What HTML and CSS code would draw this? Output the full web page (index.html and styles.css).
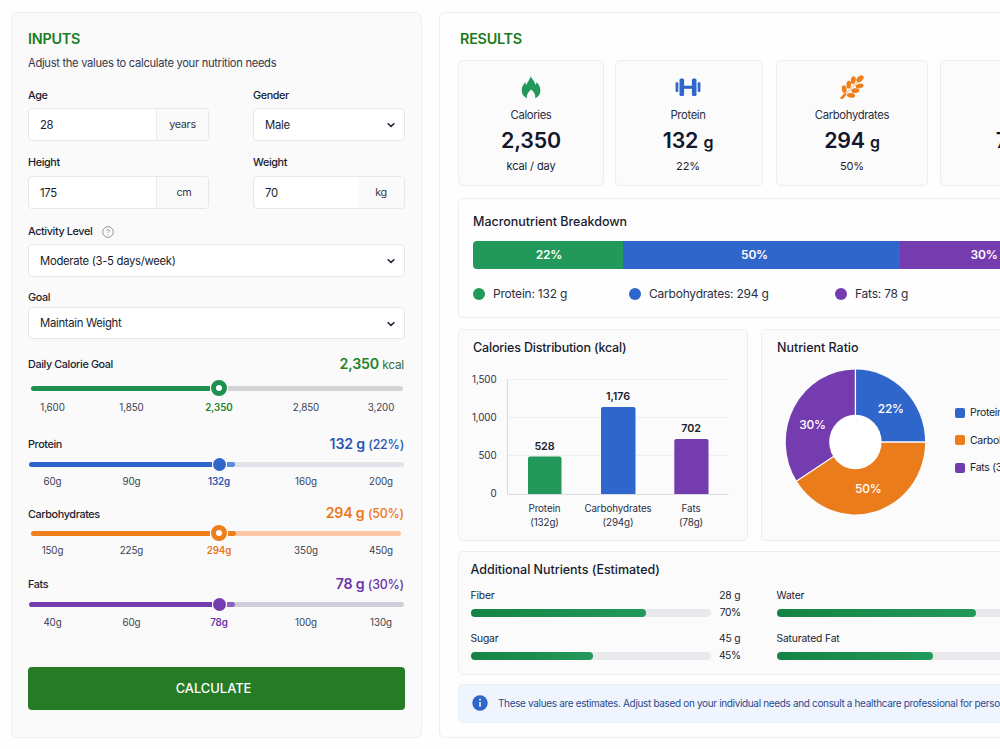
FILE: index.html
```html
<!DOCTYPE html>
<html lang="en">

<head>
	<meta charset="UTF-8">
	<meta name="viewport" content="width=device-width, initial-scale=1.0">
	<title>Nutrition Calculator</title>
	<link rel="stylesheet" href="styles.css">
</head>

<body>
	<div class="page">
		<!-- inputs -->
		<form class="panel inputs">
			<h2 class="panel-title">INPUTS</h2>
			<p class="panel-sub">Adjust the values to calculate your nutrition needs</p>

			<div class="field-row">
				<div class="field">
					<label for="age">Age</label>
					<div class="control"><input id="age" type="text" value="28"><span class="unit">years</span></div>
				</div>
				<div class="field field-right">
					<label for="gender">Gender</label>
					<div class="control">
						<select id="gender"><option>Male</option><option>Female</option></select>
						<svg class="chevron" viewBox="0 0 10 6"><path d="M1.6 1.2 5 4.4 8.4 1.2"/></svg>
					</div>
				</div>
			</div>

			<div class="field-row second">
				<div class="field">
					<label for="height">Height</label>
					<div class="control"><input id="height" type="text" value="175"><span class="unit unit-cm">cm</span></div>
				</div>
				<div class="field field-right">
					<label for="weight">Weight</label>
					<div class="control"><input id="weight" type="text" value="70"><span class="unit unit-kg">kg</span></div>
				</div>
			</div>

			<div class="field field-activity">
				<label for="activity">Activity Level
					<svg class="help" viewBox="0 0 12 12"><circle cx="6" cy="6" r="5.3"/><path d="M4.6 4.8a1.4 1.3 0 1 1 2.1 1.1c-.5.3-.7.5-.7 1.1M6 8.3v.8"/></svg>
				</label>
				<div class="control">
					<select id="activity"><option>Moderate (3-5 days/week)</option></select>
					<svg class="chevron" viewBox="0 0 10 6"><path d="M1.6 1.2 5 4.4 8.4 1.2"/></svg>
				</div>
			</div>

			<div class="field field-goal">
				<label for="goal">Goal</label>
				<div class="control">
					<select id="goal"><option>Maintain Weight</option></select>
					<svg class="chevron" viewBox="0 0 10 6"><path d="M1.6 1.2 5 4.4 8.4 1.2"/></svg>
				</div>
			</div>

			<!-- sliders -->
			<div class="slider calories">
				<div class="slider-head"><span class="name">Daily Calorie Goal</span><span class="value">2,350 <small>kcal</small></span></div>
				<div class="track"><i class="fill"></i><i class="thumb ring"></i><i class="rest"></i></div>
				<div class="ticks"><span>1,600</span><span>1,850</span><b>2,350</b><span>2,850</span><span>3,200</span></div>
			</div>

			<div class="slider protein">
				<div class="slider-head"><span class="name">Protein</span><span class="value">132 g <small>(22%)</small></span></div>
				<div class="track"><i class="fill"></i><i class="thumb"></i><i class="extra"></i><i class="rest"></i></div>
				<div class="ticks"><span>60g</span><span>90g</span><b>132g</b><span>160g</span><span>200g</span></div>
			</div>

			<div class="slider carbs">
				<div class="slider-head"><span class="name">Carbohydrates</span><span class="value">294 g <small>(50%)</small></span></div>
				<div class="track"><i class="fill"></i><i class="thumb ring"></i><i class="extra"></i><i class="rest"></i></div>
				<div class="ticks"><span>150g</span><span>225g</span><b>294g</b><span>350g</span><span>450g</span></div>
			</div>

			<div class="slider fats">
				<div class="slider-head"><span class="name">Fats</span><span class="value">78 g <small>(30%)</small></span></div>
				<div class="track"><i class="fill"></i><i class="thumb"></i><i class="extra"></i><i class="rest"></i></div>
				<div class="ticks"><span>40g</span><span>60g</span><b>78g</b><span>100g</span><span>130g</span></div>
			</div>

			<button type="button" class="calculate">CALCULATE</button>
		</form>

		<!-- results -->
		<section class="panel results">
			<h2 class="panel-title">RESULTS</h2>

			<div class="cards">
				<div class="card stat">
					<svg class="icon" viewBox="0 0 24 24"><path fill="#22995a" d="M11.600.8c.5 3 4.300 4.900 4.700 9 .9-.7 1.300-1.700 1.300-2.900 2.300 2.600 3.800 5.300 3.800 8.600 0 3.500-1.900 6.300-5.200 7.700.6-3.300-1.100-6.300-4.100-8.600-3 2.400-4.700 5.300-4.100 8.600-3.300-1.300-5.300-4.100-5.300-7.600 0-3.200 1.400-6 3.700-8.300.1 1.300.5 2.200 1.300 2.800C8.100 6.700 11.200 4.800 11.600.8z"/></svg>
					<span class="stat-name">Calories</span>
					<span class="stat-value">2,350</span>
					<span class="stat-note">kcal / day</span>
				</div>
				<div class="card stat stat-protein">
					<svg class="icon" viewBox="0 0 26 24"><g fill="#2f66cb"><rect x=".6" y="7.3" width="2.7" height="9.6" rx="1"/><rect x="4.500" y="3.600" width="4.600" height="17.300" rx="1.500"/><rect x="8" y="10.700" width="10" height="3.100"/><rect x="16.900" y="3.600" width="4.600" height="17.300" rx="1.500"/><rect x="22.700" y="7.300" width="2.700" height="9.600" rx="1"/></g></svg>
					<span class="stat-name">Protein</span>
					<span class="stat-value">132 <small>g</small></span>
					<span class="stat-note">22%</span>
				</div>
				<div class="card stat">
					<svg class="icon" viewBox="0 0 24 24">
						<path d="M4 21 9 15.500 18 6.500" fill="none" stroke="#ee7f1b" stroke-width=".7"/>
						<path d="M1.800 23 5 19.500" fill="none" stroke="#ee7f1b" stroke-width="2.600" stroke-linecap="round"/>
						<g fill="#ee7f1b">
							<ellipse cx="20" cy="3.800" rx="4.200" ry="2.700" transform="rotate(-42 20 3.800)"/>
							<ellipse cx="13.300" cy="5.200" rx="3.900" ry="2.400" transform="rotate(-82 13.300 5.200)"/>
							<ellipse cx="8.800" cy="9.600" rx="3.900" ry="2.400" transform="rotate(-86 8.800 9.600)"/>
							<ellipse cx="4.200" cy="14.200" rx="3.900" ry="2.400" transform="rotate(-98 4.200 14.200)"/>
							<ellipse cx="19.600" cy="11" rx="4.100" ry="2.300" transform="rotate(-12 19.600 11)"/>
							<ellipse cx="15.300" cy="15.600" rx="4" ry="2.300" transform="rotate(-2 15.300 15.600)"/>
							<ellipse cx="11" cy="20.400" rx="4.100" ry="2.300" transform="rotate(4 11 20.400)"/>
						</g>
					</svg>
					<span class="stat-name">Carbohydrates</span>
					<span class="stat-value">294 <small>g</small></span>
					<span class="stat-note">50%</span>
				</div>
				<div class="card stat">
					<svg class="icon" viewBox="0 0 24 24"><path fill="#753cb0" d="M12 1.500c4 5 7 8.500 7 13a7 7 0 0 1-14 0c0-4.500 3-8 7-13z"/></svg>
					<span class="stat-name">Fats</span>
					<span class="stat-value">78 <small>g</small></span>
					<span class="stat-note">30%</span>
				</div>
			</div>

			<div class="card breakdown">
				<h3>Macronutrient Breakdown</h3>
				<div class="stack"><span class="bg-green">22%</span><span class="bg-blue">50%</span><span class="bg-purple">30%</span></div>
				<div class="legend">
					<span><i class="bg-green"></i>Protein: 132 g</span>
					<span><i class="bg-blue"></i>Carbohydrates: 294 g</span>
					<span><i class="bg-purple"></i>Fats: 78 g</span>
				</div>
			</div>

			<div class="charts">
				<div class="card chart distribution">
					<h3>Calories Distribution (kcal)</h3>
					<svg class="bars" viewBox="0 0 288 170">
						<path class="grid" d="M49 17.500h220M49 55.500h220M49 93.500h220"/>
						<path class="axis" d="M48.500 17v115.500h221"/>
						<g class="y">
							<text x="37.500" y="21">1,500</text>
							<text x="37.500" y="58.500">1,000</text>
							<text x="37.500" y="96.500">500</text>
							<text x="37.500" y="134.500">0</text>
						</g>
						<path fill="#22995a" d="M69 132V96.500q0-2 2-2h29.500q2 0 2 2V132z"/>
						<path fill="#2f66cb" d="M142 132V47q0-2 2-2h30.500q2 0 2 2v85z"/>
						<path fill="#753cb0" d="M215.300 132V79q0-2 2-2h30.200q2 0 2 2v53z"/>
						<g class="v">
							<text x="85.500" y="88">528</text>
							<text x="159" y="38">1,176</text>
							<text x="232" y="70">702</text>
						</g>
						<g class="x">
							<text x="85.500" y="150">Protein</text><text x="85.500" y="163.500">(132g)</text>
							<text x="159" y="150">Carbohydrates</text><text x="159" y="163.500">(294g)</text>
							<text x="232" y="150">Fats</text><text x="232" y="163.500">(78g)</text>
						</g>
					</svg>
				</div>
				<div class="card chart ratio">
					<h3>Nutrient Ratio</h3>
					<div class="ratio-body">
						<svg class="donut" viewBox="0 0 160 170">
							<path fill="#2f66cb" d="M79.400 80V7.400A69.700 72.600 0 0 1 149.100 80z"/>
							<path fill="#ea7c1c" d="M79.400 80H149.100A69.700 72.600 0 0 1 20.700 119z"/>
							<path fill="#753cb0" d="M79.400 80 20.700 119A69.700 72.600 0 0 1 79.400 7.400z"/>
							<path class="cut" d="M79.400 6v74H150M79.400 80 19.900 119.500"/>
							<ellipse cx="79.400" cy="80" rx="26.200" ry="27.200" fill="#fff"/>
							<text x="114.800" y="51">22%</text>
							<text x="92.200" y="130.500">50%</text>
							<text x="36.500" y="67">30%</text>
						</svg>
						<ul>
							<li><i class="bg-blue"></i>Protein (22%)</li>
							<li><i class="bg-orange"></i>Carbohydrates (50%)</li>
							<li><i class="bg-purple"></i>Fats (30%)</li>
						</ul>
					</div>
				</div>
			</div>

			<div class="card extra-card">
				<h3>Additional Nutrients (Estimated)</h3>
				<div class="nutrients">
					<div class="nutrient"><span>Fiber</span><em>28 g</em><div class="meter"><i style="width: 73%"></i></div><em class="pct">70%</em></div>
					<div class="nutrient"><span>Water</span><em>2.5 L</em><div class="meter"><i style="width: 83%"></i></div><em class="pct">80%</em></div>
					<div class="nutrient"><span>Sugar</span><em>45 g</em><div class="meter"><i style="width: 51%"></i></div><em class="pct">45%</em></div>
					<div class="nutrient"><span>Saturated Fat</span><em>20 g</em><div class="meter"><i style="width: 65%"></i></div><em class="pct">60%</em></div>
				</div>
			</div>

			<div class="notice">
				<svg viewBox="0 0 16 16"><circle cx="8" cy="8" r="7.700" fill="#2f66cb"/><path d="M8 7v4.800" stroke="#fff" stroke-width="1.500"/><circle cx="8" cy="4.700" r=".9" fill="#fff"/></svg>
				<span>These values are estimates. Adjust based on your individual needs and consult a healthcare professional for personalized advice.</span>
			</div>
		</section>
	</div>
</body>

</html>
```
FILE: styles.css
```css
* {
	box-sizing: border-box;
	margin: 0;
	padding: 0
}

body {
	background: #fefefe;
	color: #1a1c2e;
	font-family: Inter, "Liberation Sans", sans-serif;
	font-size: 11px;
	overflow: hidden
}

i,
em {
	font-style: normal
}

ul {
	list-style: none
}

.page {
	display: flex;
	gap: 17px;
	width: 1140px;
	height: 749px;
	padding: 12px 0 11px 11px
}

.panel {
	flex: none;
	border: 1px solid #eeeff2;
	border-radius: 6px;
	background: #fafafb
}

.panel-title {
	font-size: 14.4px;
	font-weight: 600;
	line-height: 20px;
	letter-spacing: -.25px;
	color: #1c7c1f
}

/* inputs */

.inputs {
	width: 411px;
	padding: 16px 16px 0
}

.panel-sub {
	margin-top: 6px;
	font-size: 11.2px;
	line-height: 16px;
	letter-spacing: -.31px;
	color: #35384a
}

.field-row {
	display: flex;
	justify-content: space-between;
	margin-top: 16px
}

.field-row.second {
	margin-top: 13px
}

.field {
	width: 181px
}

.field-right {
	width: 152px
}

.field label,
.slider .name {
	display: flex;
	align-items: center;
	padding-top: 1px;
	font-size: 10.8px;
	font-weight: 500;
	line-height: 16px;
	letter-spacing: -.37px
}

.control {
	position: relative;
	display: flex;
	height: 33px;
	margin-top: 4px;
	border: 1px solid #e6e7ec;
	border-radius: 4px;
	background: #fff;
	overflow: hidden
}

.second .control {
	margin-top: 5px
}

.control input,
.control select {
	flex: 1;
	min-width: 0;
	padding: 0 11px;
	border: 0;
	background: none;
	font: 400 11.3px Inter, "Liberation Sans", sans-serif;
	letter-spacing: -.3px;
	color: #1a1c2e;
	outline: 0;
	-webkit-appearance: none;
	appearance: none
}

.unit {
	width: 52px;
	border-left: 1px solid #e9eaee;
	background: #fafafb;
	font-size: 10.8px;
	line-height: 32px;
	letter-spacing: -.3px;
	text-align: center;
	color: #35384a
}

.unit-cm {
	padding-left: 3px
}

.unit-kg {
	width: 46px;
	border-left: 0
}

.chevron {
	position: absolute;
	right: 8px;
	top: 13px;
	width: 10px;
	height: 6px;
	fill: none;
	stroke: #22253a;
	stroke-width: 1.5
}

.help {
	width: 12px;
	height: 12px;
	margin-left: 10px;
	fill: none;
	stroke: #8b8e99;
	stroke-width: .9
}

.field-activity,
.field-goal {
	width: 377px;
	margin-top: 14px
}

.field-goal {
	margin-top: 12px
}

.field-goal .control {
	margin-top: 1px;
	height: 32px
}

/* sliders */

.slider-head {
	display: flex;
	justify-content: space-between;
	align-items: center;
	height: 20px;
	padding-right: 1px
}

.protein .name,
.carbs .name,
.fats .name {
	padding-top: 3px
}

.value {
	font-size: 14.2px;
	font-weight: 600;
	letter-spacing: -.2px;
	color: var(--text)
}

.value small {
	font-size: 12.4px;
	font-weight: 500
}

.calories .value small {
	font-size: 11.8px;
	font-weight: 400;
	color: #2f6a3c
}

.calories .value,
.carbs .value {
	margin-top: -2px
}

.track {
	display: flex;
	align-items: center;
	height: 16px
}

.track i {
	height: 5px
}

.track .fill {
	border-radius: 3px 0 0 3px;
	background: var(--main)
}

.track .rest {
	flex: 1;
	border-radius: 0 3px 3px 0;
	background: var(--rest)
}

.track .extra {
	width: 8px;
	border-radius: 0 2px 2px 0;
	background: var(--extra)
}

.track .thumb {
	width: 13px;
	height: 13px;
	margin: 0 1px;
	border-radius: 50%;
	background: var(--main)
}

.track .ring {
	width: 16px;
	height: 16px;
	border: 5px solid var(--main);
	background: #fff
}

.ticks {
	display: grid;
	grid-template-columns: 49px 109px 66px 108px 42px;
	justify-items: center;
	font-size: 9.8px;
	line-height: 16px;
	letter-spacing: -.1px;
	color: #3c3f50
}

.ticks b {
	font-weight: 600;
	color: var(--text)
}

.calories {
	--main: #1e9150;
	--text: #1d8428;
	--rest: #d2d4d6;
	margin-top: 15px
}

.calories .track {
	margin-top: 6px;
	padding: 0 2px 0 3px
}

.calories .fill {
	width: 179px
}

.calories .ticks {
	margin-top: 4px
}

.protein {
	--main: #2f66cb;
	--extra: #5b8ae0;
	--text: #2a58b4;
	--rest: #e2e3e8;
	margin-top: 17px
}

.protein .track,
.fats .track {
	margin-top: 3px;
	padding: 0 1px
}

.protein .fill,
.fats .fill {
	width: 182.5px
}

.protein .ticks,
.carbs .ticks {
	margin-top: 2px
}

.fats .ticks {
	margin-top: 3px
}

.carbs {
	--main: #ee7f1b;
	--extra: #ee7f1b;
	--text: #ec761a;
	--rest: #f9c8a2;
	margin-top: 13px
}

.carbs .track {
	margin-top: 2px;
	padding: 0 4px 0 3px
}

.carbs .fill {
	width: 179px
}

.fats {
	--main: #753cb0;
	--extra: #8f62c2;
	--text: #6b34ab;
	--rest: #d0cfd9;
	margin-top: 14px
}

.calculate {
	display: block;
	width: 377px;
	height: 43px;
	margin-top: 36px;
	padding-right: 6px;
	border: 0;
	border-radius: 4px;
	background: #267b27;
	font: 500 12.9px Inter, "Liberation Sans", sans-serif;
	color: #fff
}

/* results */

.results {
	width: 674px;
	padding: 16px 20px 0 18px;
	background: #fefefe
}

.results .panel-title {
	padding-left: 2px
}

.card {
	border: 1px solid #ecedf1;
	border-radius: 5px;
	background: #fefefe
}

.card h3 {
	font-size: 12.5px;
	font-weight: 500;
	line-height: 18px;
	letter-spacing: -.03px
}

.card.distribution h3 {
	letter-spacing: -.18px
}

.cards {
	display: grid;
	grid-template-columns: 146px 148px 152px 152px;
	gap: 12px;
	margin-top: 11px
}

.stat {
	display: flex;
	flex-direction: column;
	align-items: center;
	height: 126px;
	padding-top: 14px;
	background: #fbfbfc
}

.stat-protein {
	margin: 0 1px 0 -1px;
	padding-right: 2px
}

.icon {
	flex: none;
	height: 24px;
	max-width: 26px
}

.stat-name {
	margin-top: 8px;
	font-size: 11.3px;
	line-height: 16px;
	letter-spacing: -.36px;
	color: #2c2f42
}

.stat-value {
	height: 30px;
	margin-top: 2px;
	font-size: 21.4px;
	font-weight: 600;
	line-height: 30px;
	letter-spacing: -.2px;
	color: #14162a
}

.stat-value small {
	font-size: 16px;
	line-height: 1
}

.stat-note {
	margin-top: 3px;
	font-size: 11px;
	line-height: 16px;
	letter-spacing: -.1px
}

.breakdown {
	height: 120px;
	margin-top: 12px;
	padding: 14px 14px 0
}

.stack {
	display: flex;
	margin-top: 10px;
	border-radius: 4px;
	overflow: hidden;
	width: 593px
}

.stack span {
	width: 150px;
	padding-left: 2px;
	font-size: 12px;
	font-weight: 600;
	line-height: 28px;
	letter-spacing: -.2px;
	text-align: center;
	color: #fff
}

.stack .bg-blue {
	width: 277px;
	padding: 0 14px 0 0
}

.stack .bg-purple {
	width: 166px
}

.bg-green {
	background: #22995a
}

.bg-blue {
	background: #2f66cb
}

.bg-purple {
	background: #753cb0
}

.bg-orange {
	background: #ee7f1b
}

.legend {
	display: grid;
	grid-template-columns: 156px 206px 150px;
	margin-top: 16px;
	font-size: 12px;
	line-height: 18px;
	letter-spacing: -.22px;
	color: #2c2f42
}

.legend span {
	display: flex;
	align-items: center
}

.legend i {
	width: 12px;
	height: 12px;
	margin-right: 8px;
	border-radius: 50%
}

.charts {
	display: flex;
	gap: 13px;
	margin-top: 11px
}

.chart {
	width: 290px;
	height: 212px;
	padding-top: 9px;
	background: #fbfbfc
}

.chart h3 {
	padding-left: 14px
}

.chart svg {
	display: block;
	margin-top: 5px
}

.bars {
	width: 288px;
	height: 170px
}

.bars text {
	font-size: 9.8px;
	letter-spacing: -.1px;
	fill: #2c2f42;
	text-anchor: middle
}

.bars .y text {
	text-anchor: end
}

.bars .v text {
	font-size: 10.8px;
	font-weight: 600;
	fill: #1a1c2e
}

.grid,
.axis {
	fill: none;
	stroke: #efeff2
}

.axis {
	stroke: #d9dbe0
}

.ratio {
	flex: 1
}

.ratio h3 {
	padding-left: 15px
}

.ratio-body {
	display: flex;
	padding-left: 14px
}

.donut {
	flex: none;
	width: 160px;
	height: 170px
}

.donut text {
	font-size: 12px;
	font-weight: 500;
	letter-spacing: -.2px;
	text-anchor: middle;
	fill: #fff
}

.cut {
	fill: none;
	stroke: #fff;
	stroke-width: 1.3
}

.ratio-body ul {
	margin: 42px 0 0 19px
}

.ratio-body li {
	display: flex;
	align-items: center;
	height: 27.6px;
	font-size: 10.5px;
	letter-spacing: -.3px;
	white-space: nowrap
}

.ratio-body li i {
	width: 10px;
	height: 10px;
	margin-right: 5px;
	border-radius: 2px
}

.extra-card {
	height: 124px;
	margin-top: 10px;
	padding: 9px 0 0 11.5px;
	background: #fbfbfc
}

.nutrients {
	display: grid;
	grid-template-columns: 270px 270px;
	column-gap: 36px;
	row-gap: 9px;
	margin-top: 8px;
	font-size: 10.3px;
	letter-spacing: -.15px
}

.nutrient {
	display: grid;
	grid-template-columns: 240px 1fr;
	line-height: 17px
}

.nutrient em {
	text-align: right;
	white-space: nowrap
}

.nutrient .pct {
	letter-spacing: -.5px
}

.meter {
	align-self: center;
	height: 8px;
	border-radius: 4px;
	background: #e9e9ed
}

.meter i {
	display: block;
	height: 8px;
	border-radius: 4px;
	background: linear-gradient(90deg, #148444, #22995a)
}

.notice {
	display: flex;
	align-items: center;
	height: 39px;
	margin-top: 9px;
	padding-left: 13px;
	border: 1px solid #e8effb;
	border-radius: 5px;
	background: #eff4fd;
	font-size: 10px;
	letter-spacing: -.34px;
	color: #2c4a8c;
	white-space: nowrap;
	overflow: hidden
}

.notice span {
	margin-top: -2px
}

.notice svg {
	flex: none;
	width: 16px;
	height: 16px;
	margin: -2px 10px 0 0
}
```
